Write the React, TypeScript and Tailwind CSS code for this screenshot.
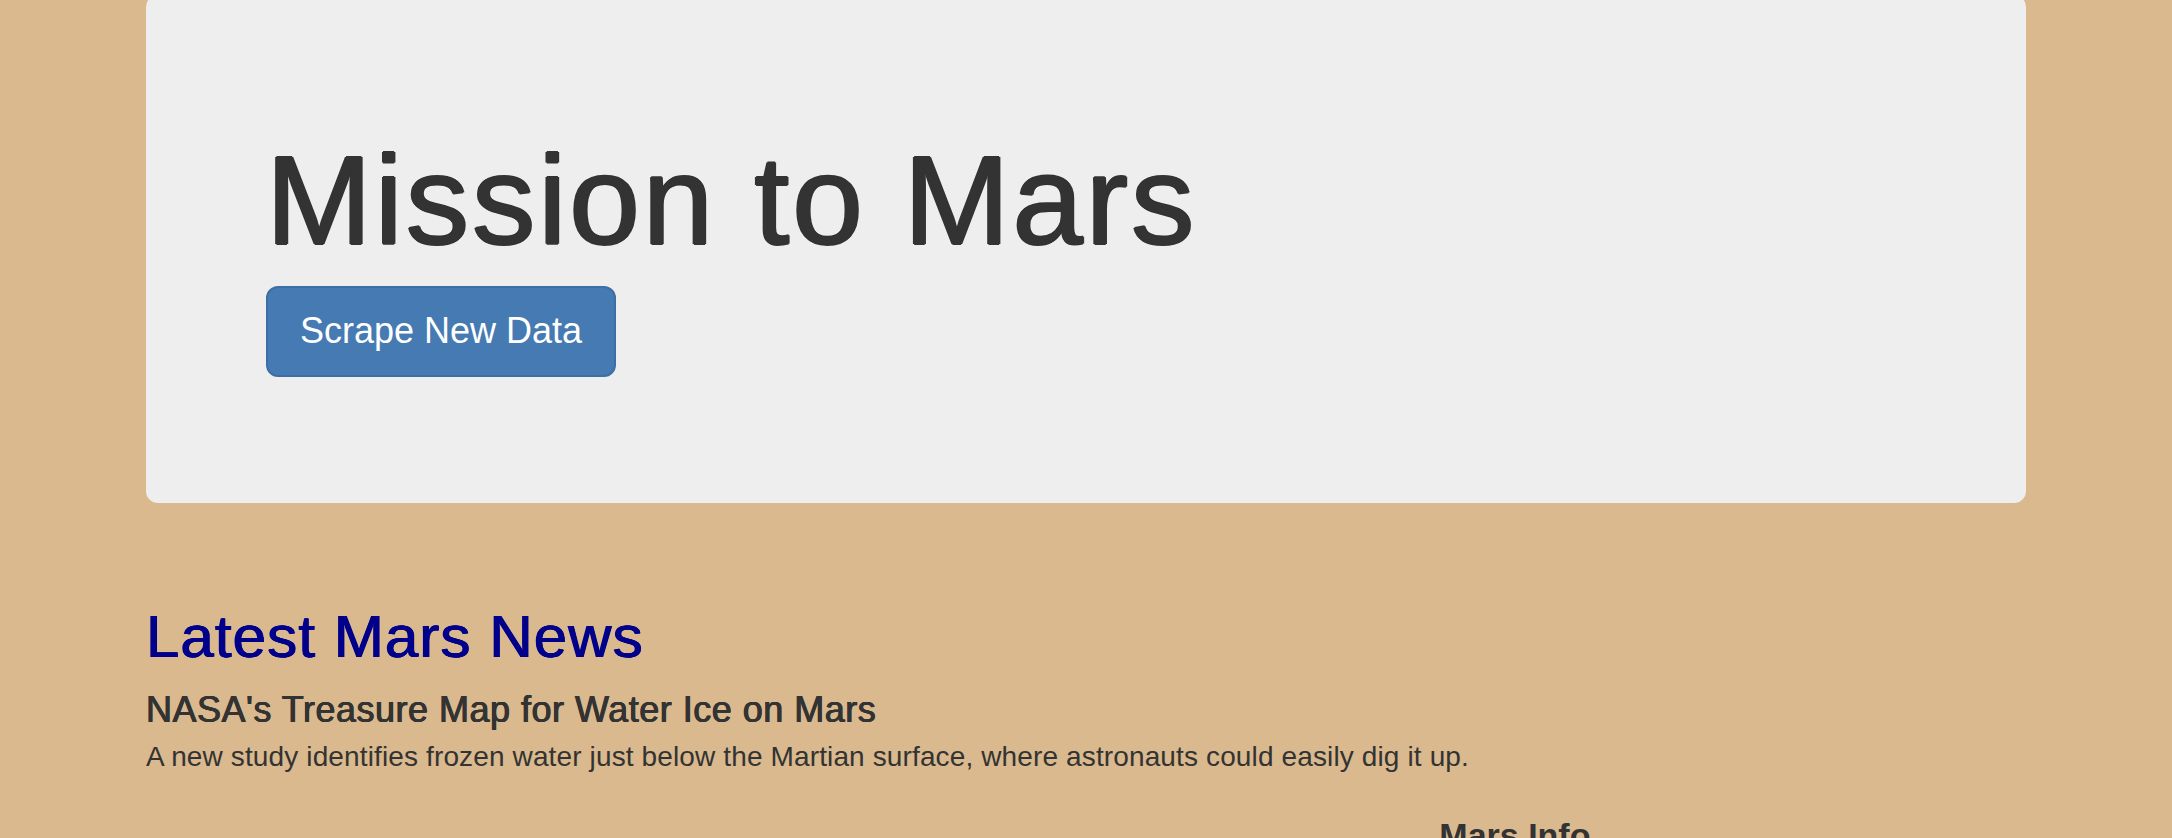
import React from "react";

export default function App() {
  return (
    <div className="min-h-screen w-full overflow-hidden bg-[#d9b98d] font-['Liberation_Sans',Arial,sans-serif] text-[#333333]">
      <div className="mx-auto w-[1940px] px-[30px]">
        <div className="mt-[-5px] rounded-[12px] bg-[#eeeeee] px-[120px] pt-[96px] pb-[126px]">
          <h1 className="mt-[40px] text-[127px] leading-[1.1] tracking-[2.8px] text-[#333333] [text-shadow:1.2px_0_0_#333333,-1.2px_0_0_#333333,0_0.7px_0_#333333,0_-0.7px_0_#333333]">
            Mission to Mars
          </h1>
          <div className="mt-[15px]">
            <button className="h-[91px] rounded-[12px] border-2 border-[#3d6ea6] bg-[#457ab3] px-[32px] text-[36px] leading-[48px] text-white">
              Scrape New Data
            </button>
          </div>
        </div>

        <div className="mt-[101px]">
          <h2 className="text-[60px] leading-[1.1] tracking-[1.1px] text-[#00008b] [text-shadow:0.6px_0_0_#00008b,-0.6px_0_0_#00008b,0_0.3px_0_#00008b]">
            Latest Mars News
          </h2>
          <h4 className="mt-[20px] text-[36px] leading-[1.1] tracking-[0.5px] text-[#333333] [text-shadow:0.45px_0_0_#333333,-0.45px_0_0_#333333,0_0.25px_0_#333333]">
            NASA's Treasure Map for Water Ice on Mars
          </h4>
          <p className="mt-[8px] text-[28px] leading-[40px] tracking-[0.13px] text-[#333333]">
            A new study identifies frozen water just below the Martian surface, where astronauts could easily dig it up.
          </p>
        </div>

        <div className="-mx-[30px] mt-[40px] grid grid-cols-[2fr_1fr]">
          <div className="px-[30px]"></div>
          <div className="px-[30px]">
            <h4 className="text-[34px] font-bold leading-[1.1] text-[#333333]">Mars Info</h4>
            <div className="h-[200px]"></div>
          </div>
        </div>
      </div>
    </div>
  );
}
